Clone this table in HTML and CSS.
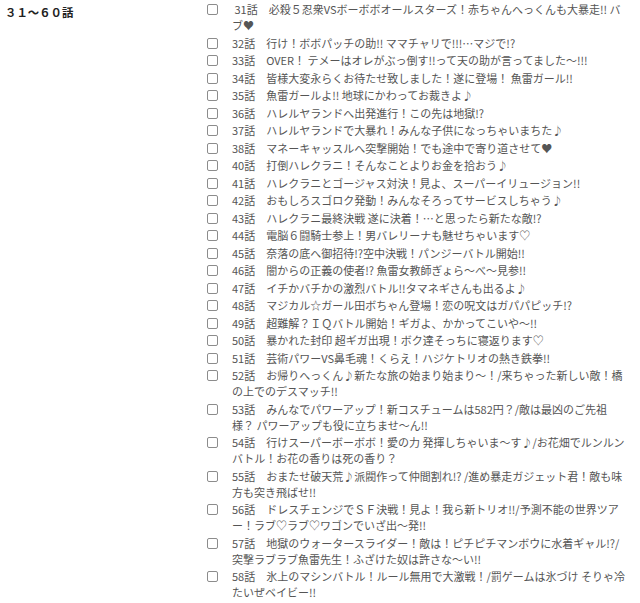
FILE: index.html
```html
<!DOCTYPE html>
<html lang="ja">
<head>
<meta charset="utf-8">
<title>31～60話</title>
<link rel="stylesheet" href="styles.css">
</head>
<body>
<div class="section">
  <h3 class="sec-title">３１～６０話</h3>
  <ul class="ep-list">
    <li class="ep"><input type="checkbox" class="ep-check"><span class="ep-text">&nbsp;31話　必殺５忍衆VSボーボボオールスターズ！赤ちゃんへっくんも大暴走!! バブ♥</span></li>
    <li class="ep"><input type="checkbox" class="ep-check"><span class="ep-text">32話　行け！ボボパッチの助!! ママチャリで!!!…マジで!?</span></li>
    <li class="ep"><input type="checkbox" class="ep-check"><span class="ep-text">33話　OVER！ テメーはオレがぶっ倒す!!って天の助が言ってました～!!!</span></li>
    <li class="ep"><input type="checkbox" class="ep-check"><span class="ep-text">34話　皆様大変永らくお待たせ致しました！遂に登場！ 魚雷ガール!!</span></li>
    <li class="ep"><input type="checkbox" class="ep-check"><span class="ep-text">35話　魚雷ガールよ!! 地球にかわってお裁きよ♪</span></li>
    <li class="ep"><input type="checkbox" class="ep-check"><span class="ep-text">36話　ハレルヤランドへ出発進行！この先は地獄!?</span></li>
    <li class="ep"><input type="checkbox" class="ep-check"><span class="ep-text">37話　ハレルヤランドで大暴れ！みんな子供になっちゃいまちた♪</span></li>
    <li class="ep"><input type="checkbox" class="ep-check"><span class="ep-text">38話　マネーキャッスルへ突撃開始！でも途中で寄り道させて♥</span></li>
    <li class="ep"><input type="checkbox" class="ep-check"><span class="ep-text">40話　打倒ハレクラニ！そんなことよりお金を拾おう♪</span></li>
    <li class="ep"><input type="checkbox" class="ep-check"><span class="ep-text">41話　ハレクラニとゴージャス対決！見よ、スーパーイリュージョン!!</span></li>
    <li class="ep"><input type="checkbox" class="ep-check"><span class="ep-text">42話　おもしろスゴロク発動！みんなそろってサービスしちゃう♪</span></li>
    <li class="ep"><input type="checkbox" class="ep-check"><span class="ep-text">43話　ハレクラニ最終決戦 遂に決着！…と思ったら新たな敵!?</span></li>
    <li class="ep"><input type="checkbox" class="ep-check"><span class="ep-text">44話　電脳６闘騎士参上！男バレリーナも魅せちゃいます♡</span></li>
    <li class="ep"><input type="checkbox" class="ep-check"><span class="ep-text">45話　奈落の底へ御招待!?空中決戦！パンジーバトル開始!!</span></li>
    <li class="ep"><input type="checkbox" class="ep-check"><span class="ep-text">46話　闇からの正義の使者!? 魚雷女教師ぎょら～べ～見参!!</span></li>
    <li class="ep"><input type="checkbox" class="ep-check"><span class="ep-text">47話　イチかバチかの激烈バトル!!タマネギさんも出るよ♪</span></li>
    <li class="ep"><input type="checkbox" class="ep-check"><span class="ep-text">48話　マジカル☆ガール田ボちゃん登場！恋の呪文はガパパピッチ!?</span></li>
    <li class="ep"><input type="checkbox" class="ep-check"><span class="ep-text">49話　超難解？ＩＱバトル開始！ギガよ、かかってこいや～!!</span></li>
    <li class="ep"><input type="checkbox" class="ep-check"><span class="ep-text">50話　暴かれた封印 超ギガ出現！ボク達そっちに寝返ります♡</span></li>
    <li class="ep"><input type="checkbox" class="ep-check"><span class="ep-text">51話　芸術パワーVS鼻毛魂！くらえ！ハジケトリオの熱き鉄拳!!</span></li>
    <li class="ep"><input type="checkbox" class="ep-check"><span class="ep-text">52話　お帰りへっくん♪新たな旅の始まり始まり～！/来ちゃった新しい敵！橋の上でのデスマッチ!!</span></li>
    <li class="ep"><input type="checkbox" class="ep-check"><span class="ep-text">53話　みんなでパワーアップ！新コスチュームは582円？/敵は最凶のご先祖様？ パワーアップも役に立ちませ～ん!!</span></li>
    <li class="ep"><input type="checkbox" class="ep-check"><span class="ep-text">54話　行けスーパーボーボボ！愛の力 発揮しちゃいま～す♪/お花畑でルンルンバトル！お花の香りは死の香り？</span></li>
    <li class="ep"><input type="checkbox" class="ep-check"><span class="ep-text">55話　おまたせ破天荒♪派閥作って仲間割れ!? /進め暴走ガジェット君！敵も味方も突き飛ばせ!!</span></li>
    <li class="ep"><input type="checkbox" class="ep-check"><span class="ep-text">56話　ドレスチェンジでＳＦ決戦！見よ！我ら新トリオ!!/予測不能の世界ツアー！ラブ♡ラブ♡ワゴンでいざ出～発!!</span></li>
    <li class="ep"><input type="checkbox" class="ep-check"><span class="ep-text">57話　地獄のウォータースライダー！敵は！ピチピチマンボウに水着ギャル!?/突撃ラブラブ魚雷先生！ふざけた奴は許さな～い!!</span></li>
    <li class="ep"><input type="checkbox" class="ep-check"><span class="ep-text">58話　氷上のマシンバトル！ルール無用で大激戦！/罰ゲームは氷づけ そりゃ冷たいぜベイビー!!</span></li>
  </ul>
</div>
</body>
</html>
```

FILE: styles.css
```css
html, body {
  margin: 0;
  padding: 0;
  background: #fff;
}

body {
  font-family: "Noto Sans CJK JP", "Noto Sans", sans-serif;
  font-size: 11px;
  color: #555;
}

.section {
  display: grid;
  grid-template-columns: 200px 1fr;
  align-items: start;
}

.sec-title {
  margin: 0;
  padding: 4px 0 0 5px;
  font-size: 11.4px;
  line-height: 16px;
  font-weight: bold;
  color: #222;
}

.ep-list {
  list-style: none;
  margin: 0;
  padding: 1px 13px 0 7px;
}

.ep {
  display: flex;
  align-items: flex-start;
  padding-bottom: 1.5px;
  line-height: 16px;
}

.ep-check {
  appearance: none;
  -webkit-appearance: none;
  flex: none;
  width: 11px;
  height: 11px;
  margin: 3px 14px 0 0;
  border: 1px solid #8c8c8c;
  border-radius: 2px;
  background: #fff;
}

.ep-text {
  flex: 1;
  line-break: normal;
  word-break: normal;
}
```
